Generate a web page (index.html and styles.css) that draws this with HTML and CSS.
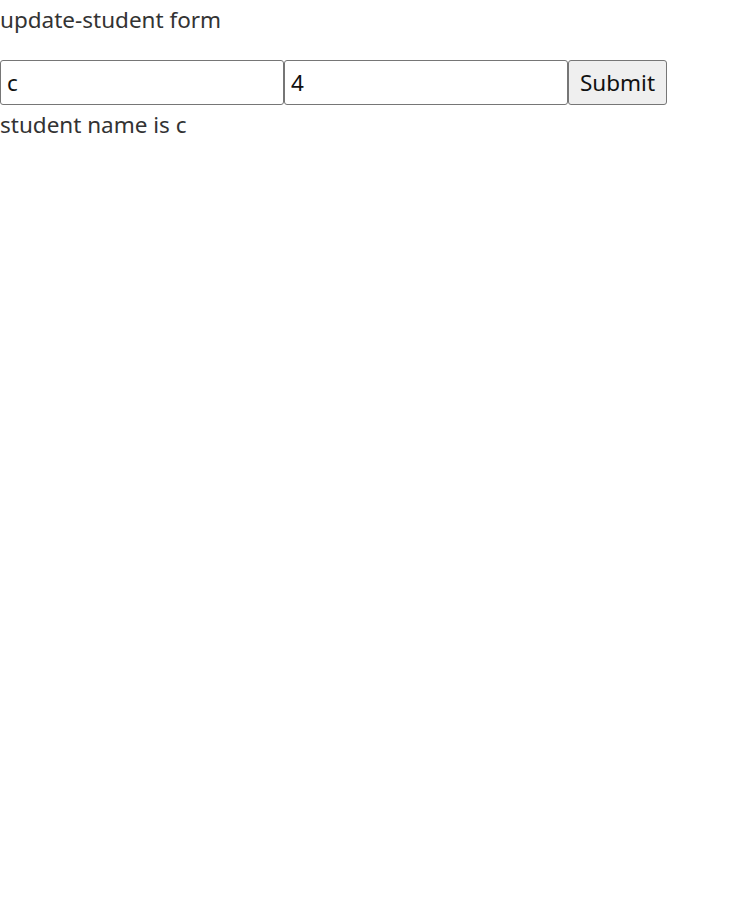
FILE: index.html
```html
<!DOCTYPE html>
<html>
<head>
<meta charset="utf-8">
<link rel="stylesheet" href="styles.css">
</head>
<body>
<div class="app">
  <div class="title">update-student form</div>
  <form class="form-row">
    <input class="field" type="text" value="c">
    <input class="field" type="text" value="4">
    <button class="submit" type="button">Submit</button>
  </form>
  <div class="result">student name is c</div>
</div>
</body>
</html>
```
FILE: styles.css
```css
html, body {
  margin: 0;
  padding: 0;
  background: #fff;
}
body {
  font-family: "Noto Sans", "Open Sans", sans-serif;
  font-size: 22.5px;
  color: #333;
}
.title {
  line-height: 33px;
  padding-top: 3px;
  margin-bottom: 24px;
}
.form-row {
  display: flex;
  margin: 0;
}
.field {
  box-sizing: border-box;
  width: 284px;
  height: 45px;
  margin: 0;
  padding: 1px 6px;
  border: 1px solid #767676;
  border-radius: 3px;
  font-family: inherit;
  font-size: 22.5px;
  color: #111;
  background: #fff;
}
.submit {
  box-sizing: border-box;
  width: 99px;
  height: 45px;
  margin: 0;
  padding: 0 10px;
  border: 1px solid #767676;
  border-radius: 3px;
  background: #efefef;
  font-family: inherit;
  font-size: 22.5px;
  color: #111;
}
.result {
  line-height: 33px;
  margin-top: 3px;
}
```
